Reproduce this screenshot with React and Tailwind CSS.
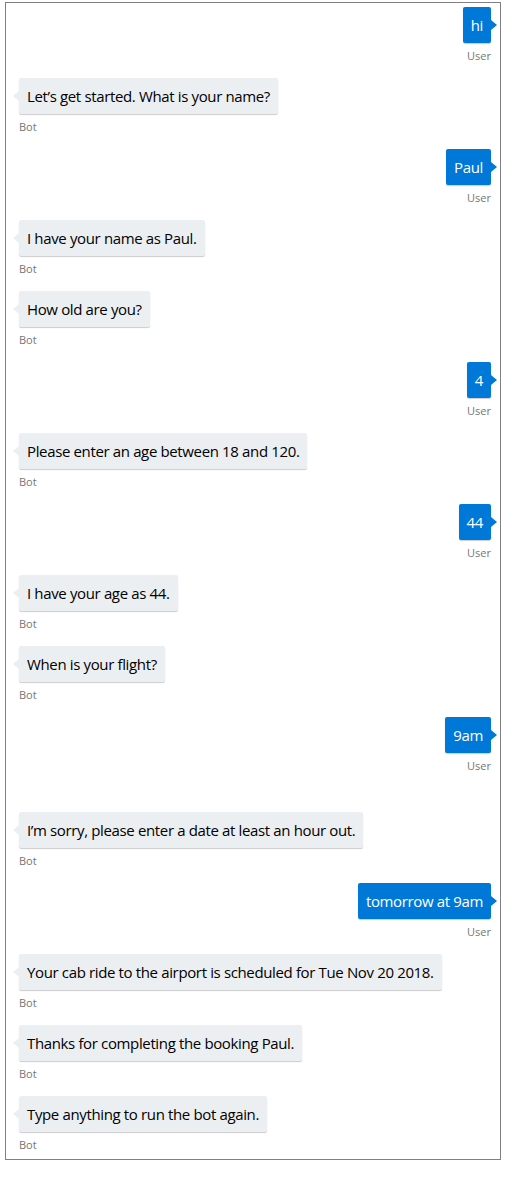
import React from "react";

const messages = [
  { from: "user", text: "hi" },
  { from: "bot", text: "Let\u2019s get started. What is your name?" },
  { from: "user", text: "Paul" },
  { from: "bot", text: "I have your name as Paul." },
  { from: "bot", text: "How old are you?" },
  { from: "user", text: "4" },
  { from: "bot", text: "Please enter an age between 18 and 120." },
  { from: "user", text: "44" },
  { from: "bot", text: "I have your age as 44." },
  { from: "bot", text: "When is your flight?" },
  { from: "user", text: "9am", extra: true },
  { from: "bot", text: "I\u2019m sorry, please enter a date at least an hour out." },
  { from: "user", text: "tomorrow at 9am" },
  { from: "bot", text: "Your cab ride to the airport is scheduled for Tue Nov 20 2018." },
  { from: "bot", text: "Thanks for completing the booking Paul." },
  { from: "bot", text: "Type anything to run the bot again." },
];

const Message = ({ from, text, extra }) => {
  const isUser = from === "user";
  return (
    <div className={`flex flex-col ${isUser ? "items-end" : "items-start"} ${extra ? "mb-[38px]" : "mb-[14px] last:mb-[6px]"}`}>
      <div
        className={`relative h-9 px-2 py-2 rounded-[2px] text-[15px] leading-5 tracking-[-0.36px] shadow-[0_1px_1px_0_rgba(0,0,0,0.2)] ${
          isUser ? "bg-[#0078d7] text-white" : "bg-[#eceff1] text-black"
        }`}
      >
        {text}
        {isUser ? (
          <span className="absolute top-[13px] right-[-6px] w-0 h-0 border-y-[5px] border-y-transparent border-l-[6px] border-l-[#0078d7]" />
        ) : (
          <span className="absolute top-[13px] left-[-6px] w-0 h-0 border-y-[5px] border-y-transparent border-r-[6px] border-r-[#eceff1]" />
        )}
      </div>
      <div className="mt-[5px] text-[11px] leading-4 text-[#767676]">{isUser ? "User" : "Bot"}</div>
    </div>
  );
};

const App = () => {
  return (
    <div className="w-[516px] min-h-[1182px] bg-white pt-[2px] font-['Open_Sans',sans-serif]">
      <div className="ml-[5px] w-[496px] border border-[#808080] pt-[4px] pl-[13px] pr-[9px]">
        {messages.map((m, i) => (
          <Message key={i} {...m} />
        ))}
      </div>
    </div>
  );
};

export default App;
